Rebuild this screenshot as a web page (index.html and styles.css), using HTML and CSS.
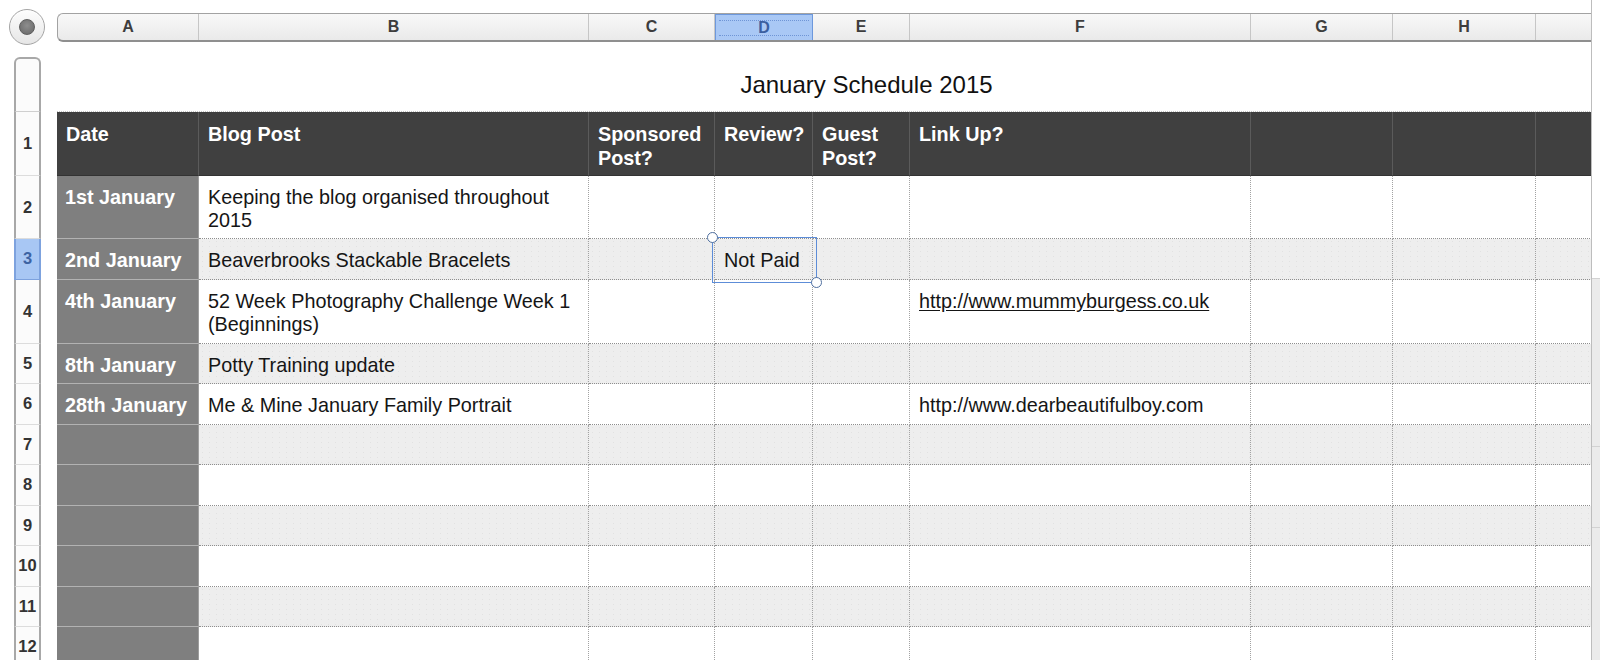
FILE: index.html
```html
<!DOCTYPE html>
<html lang="en">
  <head>
    <meta charset="UTF-8" />
    <meta name="viewport" content="width=device-width, initial-scale=1.0" />
    <title>January Schedule 2015</title>
    <link rel="stylesheet" href="styles.css">
  </head>
  <body>
    <div class="window">
      <div class="view">
        <!-- corner button + column letters -->
        <div class="top">
          <div class="corner"><span class="dot"></span></div>
          <div class="colbar">
            <div class="col">A</div>
            <div class="col">B</div>
            <div class="col">C</div>
            <div class="col sel">D</div>
            <div class="col">E</div>
            <div class="col">F</div>
            <div class="col">G</div>
            <div class="col">H</div>
            <div class="col"></div>
          </div>
        </div>

        <div class="sheet">
          <div class="row title-row">
            <div class="num first"></div>
            <div class="title">January Schedule 2015</div>
          </div>

          <div class="row head tall">
            <div class="num">1</div>
            <div class="cell">Date</div>
            <div class="cell">Blog Post</div>
            <div class="cell">Sponsored Post?</div>
            <div class="cell">Review?</div>
            <div class="cell">Guest Post?</div>
            <div class="cell">Link Up?</div>
            <div class="cell"></div>
            <div class="cell"></div>
            <div class="cell"></div>
          </div>

          <div class="row r2">
            <div class="num">2</div>
            <div class="cell date">1st January</div>
            <div class="cell">Keeping the blog organised throughout 2015</div>
            <div class="cell"></div>
            <div class="cell"></div>
            <div class="cell"></div>
            <div class="cell"></div>
            <div class="cell"></div>
            <div class="cell"></div>
            <div class="cell"></div>
          </div>

          <div class="row alt">
            <div class="num active">3</div>
            <div class="cell date">2nd January</div>
            <div class="cell">Beaverbrooks Stackable Bracelets</div>
            <div class="cell"></div>
            <div class="cell picked">
              Not Paid
              <div class="selection">
                <span class="handle tl"></span>
                <span class="handle br"></span>
              </div>
            </div>
            <div class="cell"></div>
            <div class="cell"></div>
            <div class="cell"></div>
            <div class="cell"></div>
            <div class="cell"></div>
          </div>

          <div class="row tall">
            <div class="num">4</div>
            <div class="cell date">4th January</div>
            <div class="cell">52 Week Photography Challenge Week 1 (Beginnings)</div>
            <div class="cell"></div>
            <div class="cell"></div>
            <div class="cell"></div>
            <div class="cell"><span class="link">http://www.mummyburgess.co.uk</span></div>
            <div class="cell"></div>
            <div class="cell"></div>
            <div class="cell"></div>
          </div>

          <div class="row alt">
            <div class="num">5</div>
            <div class="cell date">8th January</div>
            <div class="cell">Potty Training update</div>
            <div class="cell"></div>
            <div class="cell"></div>
            <div class="cell"></div>
            <div class="cell"></div>
            <div class="cell"></div>
            <div class="cell"></div>
            <div class="cell"></div>
          </div>

          <div class="row">
            <div class="num">6</div>
            <div class="cell date">28th January</div>
            <div class="cell">Me &amp; Mine January Family Portrait</div>
            <div class="cell"></div>
            <div class="cell"></div>
            <div class="cell"></div>
            <div class="cell">http://www.dearbeautifulboy.com</div>
            <div class="cell"></div>
            <div class="cell"></div>
            <div class="cell"></div>
          </div>

          <div class="row alt">
            <div class="num">7</div>
            <div class="cell date"></div>
            <div class="cell"></div><div class="cell"></div><div class="cell"></div><div class="cell"></div>
            <div class="cell"></div><div class="cell"></div><div class="cell"></div><div class="cell"></div>
          </div>
          <div class="row">
            <div class="num">8</div>
            <div class="cell date"></div>
            <div class="cell"></div><div class="cell"></div><div class="cell"></div><div class="cell"></div>
            <div class="cell"></div><div class="cell"></div><div class="cell"></div><div class="cell"></div>
          </div>
          <div class="row alt">
            <div class="num">9</div>
            <div class="cell date"></div>
            <div class="cell"></div><div class="cell"></div><div class="cell"></div><div class="cell"></div>
            <div class="cell"></div><div class="cell"></div><div class="cell"></div><div class="cell"></div>
          </div>
          <div class="row">
            <div class="num">10</div>
            <div class="cell date"></div>
            <div class="cell"></div><div class="cell"></div><div class="cell"></div><div class="cell"></div>
            <div class="cell"></div><div class="cell"></div><div class="cell"></div><div class="cell"></div>
          </div>
          <div class="row alt">
            <div class="num">11</div>
            <div class="cell date"></div>
            <div class="cell"></div><div class="cell"></div><div class="cell"></div><div class="cell"></div>
            <div class="cell"></div><div class="cell"></div><div class="cell"></div><div class="cell"></div>
          </div>
          <div class="row">
            <div class="num">12</div>
            <div class="cell date"></div>
            <div class="cell"></div><div class="cell"></div><div class="cell"></div><div class="cell"></div>
            <div class="cell"></div><div class="cell"></div><div class="cell"></div><div class="cell"></div>
          </div>
        </div>
      </div>

      <!-- vertical scroller on the right edge -->
      <div class="vscroll">
        <div class="blank"></div>
        <div class="track"></div>
        <div class="track"></div>
        <div class="track last"></div>
      </div>
    </div>
  </body>
</html>
```

FILE: styles.css
```css
* {
  box-sizing: border-box;
}

body {
  margin: 0;
  background: #fff;
  font-family: "Liberation Sans", Arial, Helvetica, sans-serif;
  color: #151515;
  overflow: hidden;
}

.window {
  display: flex;
  width: 1600px;
  height: 660px;
}

.view {
  flex: 1;
  overflow: hidden;
}

/* ---------- top strip ---------- */
.top {
  display: flex;
  align-items: flex-start;
  height: 42px;
  padding-left: 9px;
  gap: 12px;
}

.corner {
  flex: none;
  width: 36px;
  height: 36px;
  margin-top: 9px;
  border-radius: 50%;
  border: 1px solid #a4a4a4;
  background: linear-gradient(#fdfdfd, #e6e6e6);
  display: flex;
  align-items: center;
  justify-content: center;
  box-shadow: inset 0 1px 1px #fff;
}

.dot {
  width: 16px;
  height: 16px;
  border-radius: 50%;
  border: 1px solid #5e5e5e;
  background: radial-gradient(circle at 50% 40%, #8e8e8e, #666);
}

.colbar {
  flex: none;
  display: grid;
  grid-template-columns: 141px 390px 126px 98px 97px 341px 142px 143px 140px;
  height: 29px;
  margin-top: 13px;
  border: 1px solid #a2a2a2;
  border-bottom: 2px solid #8f8f8f;
  border-right: none;
  border-radius: 6px 0 0 6px;
  background: linear-gradient(#f8f8f8, #eaeaea);
}

.col {
  display: flex;
  align-items: center;
  justify-content: center;
  border-right: 1px solid #c6c6c6;
  font-size: 16px;
  font-weight: bold;
  color: #3d3d3d;
}

.col.sel {
  position: relative;
  background: #a9c8f5;
  border: 1px solid #6d98dc;
  border-bottom: none;
  color: #3b5f9f;
}

.col.sel::after {
  content: "";
  position: absolute;
  left: 3px;
  right: 3px;
  top: 5px;
  bottom: 4px;
  border-top: 1px dotted #6f95d6;
  border-bottom: 1px dotted #6f95d6;
}

/* ---------- sheet grid ---------- */
.row {
  display: grid;
  grid-template-columns: 57px 142px 390px 126px 98px 97px 341px 142px 143px 140px;
  height: 40.5px;
}

.row.tall {
  height: 64px;
}

.row.r2 {
  height: 63px;
}

.title-row {
  height: 70px;
}

.num {
  width: 27px;
  margin-left: 14px;
  display: flex;
  align-items: center;
  justify-content: center;
  background: #fbfbfb;
  border-left: 2px solid #a8a8a8;
  border-right: 2px solid #a8a8a8;
  border-bottom: 1px solid #dcdcdc;
  font-size: 16.5px;
  font-weight: bold;
  color: #333;
}

.num.first {
  margin-top: 15px;
  border-top: 2px solid #a8a8a8;
  border-radius: 6px 6px 0 0;
  border-bottom-color: #cfcfcf;
}

.num.active {
  background: #a8c7f4;
  border-color: #7da2de;
  color: #3d63a3;
}

.title {
  grid-column: 2 / -1;
  text-align: center;
  padding-top: 29px;
  font-size: 24px;
  line-height: 28px;
  color: #111;
  border-bottom: 1px dotted #c4c4c4;
}

.cell {
  padding: 10px 8px 0 9px;
  font-size: 19.8px;
  line-height: 23px;
  border-right: 1px dotted #a2a2a2;
  border-bottom: 1px dotted #8e8e8e;
}

.row.alt .cell {
  background-color: #eeeeee;
  background-image: radial-gradient(circle, #e2e2e2 0.6px, transparent 0.8px);
  background-size: 7px 5px;
}

.head .cell {
  background: #404040;
  color: #fff;
  font-weight: bold;
  line-height: 24px;
  border-right: 1px solid #5b5b5b;
  border-bottom: 1px solid #333;
}

.cell.date,
.row.alt .cell.date {
  background: #7f7f7f;
  color: #fff;
  font-weight: bold;
  padding-left: 8px;
  border-right: 1px solid #9d9d9d;
  border-bottom: 1px solid #b2b2b2;
}

.head .cell:first-child + .cell {
  padding-left: 8px;
}

.link {
  text-decoration: underline;
  text-underline-offset: 2px;
}

/* selected cell D3 */
.picked {
  position: relative;
}

.selection {
  position: absolute;
  top: -2px;
  left: -3px;
  right: -5px;
  bottom: -4px;
  border: 1.5px solid #5d8dd8;
}

.handle {
  position: absolute;
  width: 11px;
  height: 11px;
  border-radius: 50%;
  background: #fff;
  border: 1.5px solid #4f6f9f;
}

.handle.tl {
  top: -6px;
  left: -6px;
}

.handle.br {
  bottom: -6px;
  right: -6px;
}

/* ---------- right edge ---------- */
.vscroll {
  flex: none;
  width: 9px;
  display: flex;
  flex-direction: column;
  border-left: 1px solid #bdbdbd;
}

.vscroll .blank {
  height: 278px;
}

.vscroll .track {
  height: 168px;
  background: #ebebeb;
  border-top: 1px solid #d2d2d2;
}

.vscroll .track + .track {
  height: 81px;
}

.vscroll .track.last {
  flex: 1;
}
```
